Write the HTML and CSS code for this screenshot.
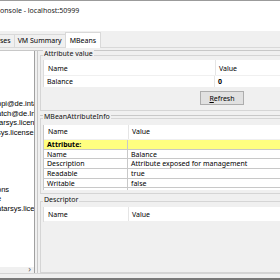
FILE: index.html
```html
<!DOCTYPE html>
<html lang="en">
<head>
    <meta charset="UTF-8">
    <meta name="viewport" content="width=device-width, initial-scale=1.0">
    <title>JConsole - MBeans</title>
    <link rel="stylesheet" href="styles.css">
</head>
<body>

<div class="window">
    <div class="titlebar">
        <span class="title">onsole - localhost:50999</span>
    </div>

    <div class="tabs">
        <div class="tab tab-cut">ses</div>
        <div class="tab">VM Summary</div>
        <div class="tab active">MBeans</div>
    </div>

    <div class="content">
        <div class="splitpane">
            <div class="tree">
                <div class="tree-list">
                    <div class="node">ppi@de.intarsys</div>
                    <div class="node">atch@de.Intarsys</div>
                    <div class="node">tarsys.license</div>
                    <div class="node">sys.license.mgmt</div>
                    <div class="node">&nbsp;</div>
                    <div class="node">&nbsp;</div>
                    <div class="node">&nbsp;</div>
                    <div class="node">&nbsp;</div>
                    <div class="node">&nbsp;</div>
                    <div class="node">ons</div>
                    <div class="node">e</div>
                    <div class="node">atarsys.license</div>
                </div>
                <div class="hscroll"><span class="arrow">&rsaquo;</span></div>
            </div>

            <div class="divider"></div>

            <div class="details">
                <div class="group group-value">
                    <div class="legend">Attribute value</div>
                    <div class="grid">
                        <div class="row head">
                            <div class="cell key">Name</div>
                            <div class="cell val">Value</div>
                        </div>
                        <div class="row">
                            <div class="cell key">Balance</div>
                            <div class="cell val bold">0</div>
                        </div>
                    </div>
                    <div class="actions">
                        <button class="button"><u>R</u>efresh</button>
                    </div>
                </div>

                <div class="hsplit"></div>

                <div class="group group-info">
                    <div class="legend">MBeanAttributeInfo</div>
                    <div class="grid info">
                        <div class="row head">
                            <div class="cell key">Name</div>
                            <div class="cell val">Value</div>
                        </div>
                        <div class="row lined highlight">
                            <div class="cell key bold">Attribute:</div>
                            <div class="cell val"></div>
                        </div>
                        <div class="row lined">
                            <div class="cell key">Name</div>
                            <div class="cell val">Balance</div>
                        </div>
                        <div class="row lined">
                            <div class="cell key">Description</div>
                            <div class="cell val">Attribute exposed for management</div>
                        </div>
                        <div class="row lined">
                            <div class="cell key">Readable</div>
                            <div class="cell val">true</div>
                        </div>
                        <div class="row lined">
                            <div class="cell key">Writable</div>
                            <div class="cell val">false</div>
                        </div>
                        <div class="row lined">
                            <div class="cell key"></div>
                            <div class="cell val"></div>
                        </div>
                    </div>
                </div>

                <div class="group group-desc">
                    <div class="legend">Descriptor</div>
                    <div class="grid">
                        <div class="row head">
                            <div class="cell key">Name</div>
                            <div class="cell val">Value</div>
                        </div>
                    </div>
                </div>
            </div>
        </div>
    </div>

    <div class="statusbar"></div>
</div>

</body>
</html>
```

FILE: styles.css
```css
html, body {
    margin: 0;
    padding: 0;
    overflow: hidden;
}
body {
    width: 280px;
    height: 280px;
    background-color: #f0f0f0;
    font-family: "Noto Sans", sans-serif;
    font-size: 7px;
    color: #000;
}
.window {
    display: flex;
    flex-direction: column;
    height: 280px;
    width: 280px;
}

/* title bar */
.titlebar {
    height: 30px;
    flex-shrink: 0;
    background-color: #fff;
    border-top: 1px solid #9b9b9b;
}
.title {
    display: block;
    padding-top: 5px;
    line-height: 9px;
    color: #222;
    white-space: nowrap;
}

/* tabs */
.tabs {
    display: flex;
    align-items: flex-end;
    height: 16px;
    flex-shrink: 0;
    border-bottom: 1px solid #d9d9d9;
}
.tab {
    height: 12px;
    line-height: 12px;
    padding: 0 3px;
    border: 1px solid #d9d9d9;
    border-bottom: none;
    background-color: #f0f0f0;
    margin-right: -1px;
    white-space: nowrap;
}
.tab-cut {
    margin-left: -4px;
}
.active {
    height: 15px;
    line-height: 16px;
    background-color: #fff;
    margin-bottom: -1px;
    position: relative;
    padding: 0 4px;
}

/* content */
.content {
    flex: 1;
    min-height: 0;
    padding-top: 2px;
    display: flex;
    flex-direction: column;
}
.splitpane {
    flex: 1;
    min-height: 0;
    display: flex;
    border-top: 1px solid #c8c8c8;
}
.tree {
    width: 34px;
    display: flex;
    flex-direction: column;
    border-right: 1px solid #a0a0a0;
}
.tree-list {
    flex: 1;
    background-color: #fff;
    padding-top: 48px;
    overflow: hidden;
    font-family: "Liberation Sans", sans-serif;
    font-size: 7.5px;
}
.node {
    height: 9.5px;
    line-height: 9.5px;
    white-space: nowrap;
    margin-left: -3px;
}
.hscroll {
    height: 6px;
    background-color: #f0f0f0;
    position: relative;
}
.arrow {
    position: absolute;
    right: 3px;
    top: -3px;
    font-size: 9px;
    line-height: 10px;
    color: #606060;
}
.divider {
    width: 2px;
    border-right: 1px solid #c8c8c8;
}
.details {
    flex: 1;
    min-width: 0;
    padding-left: 2px;
    display: flex;
    flex-direction: column;
}

/* group boxes */
.group {
    padding-left: 2px;
    border: 1px solid #d5d5d5;
    border-right: none;
}
.legend {
    display: table;
    margin-top: -6px;
    padding: 0 1px;
    line-height: 8px;
    background-color: #f0f0f0;
    color: #111;
}
.group-value {
    margin-top: 4px;
    padding-bottom: 5px;
}
.group-value .grid {
    margin-top: 2px;
}
.hsplit {
    height: 4px;
    border-bottom: 1px solid #c8c8c8;
}
.group-info {
    margin-top: 2px;
    padding-bottom: 3px;
}
.group-info .grid {
    margin-top: 4px;
}
.group-desc {
    flex: 1;
    margin-top: 7px;
}
.group-desc .grid {
    margin-top: 3px;
}

/* tables */
.grid {
    width: 300px;
    border-left: 1px solid #dcdcdc;
}
.row {
    display: flex;
    background-color: #fff;
}
.cell {
    padding-left: 3px;
    white-space: nowrap;
}
.key {
    width: 167px;
    flex-shrink: 0;
    border-right: 1px solid #e5e5e5;
}
.val {
    flex: 1;
}
.head {
    height: 15px;
    line-height: 17px;
    border-bottom: 1px solid #f0f0f0;
}
.head .key {
    padding-left: 4px;
}
.grid .row:not(.head) {
    height: 11px;
    line-height: 11px;
}
.bold {
    font-weight: bold;
}
.info {
    height: 65px;
    overflow: hidden;
    border-left: 1px solid #c8c8c8;
}
.info .key,
.group-desc .key {
    width: 80px;
}
.info .head {
    height: 14px;
    line-height: 14px;
}
.info .row.lined {
    height: 9.7px;
    line-height: 9.7px;
    box-sizing: border-box;
    border-bottom: 1px solid #c8c8c8;
}
.info .row.lined .key {
    border-right: 1px solid #c8c8c8;
}
.highlight {
    background-color: #ffff80 !important;
}
.group-desc .head {
    height: 14px;
    line-height: 16px;
}

/* button */
.actions {
    display: flex;
    padding: 4px 0 0 157px;
}
.button {
    width: 44px;
    height: 14px;
    padding: 0;
    font-family: "Noto Sans", sans-serif;
    font-size: 7px;
    background-color: #e1e1e1;
    border: 1px solid #adadad;
    color: #000;
}

.statusbar {
    height: 4px;
    flex-shrink: 0;
    border-top: 1px solid #d5d5d5;
    border-bottom: 2px solid #7a7a7a;
}
```
